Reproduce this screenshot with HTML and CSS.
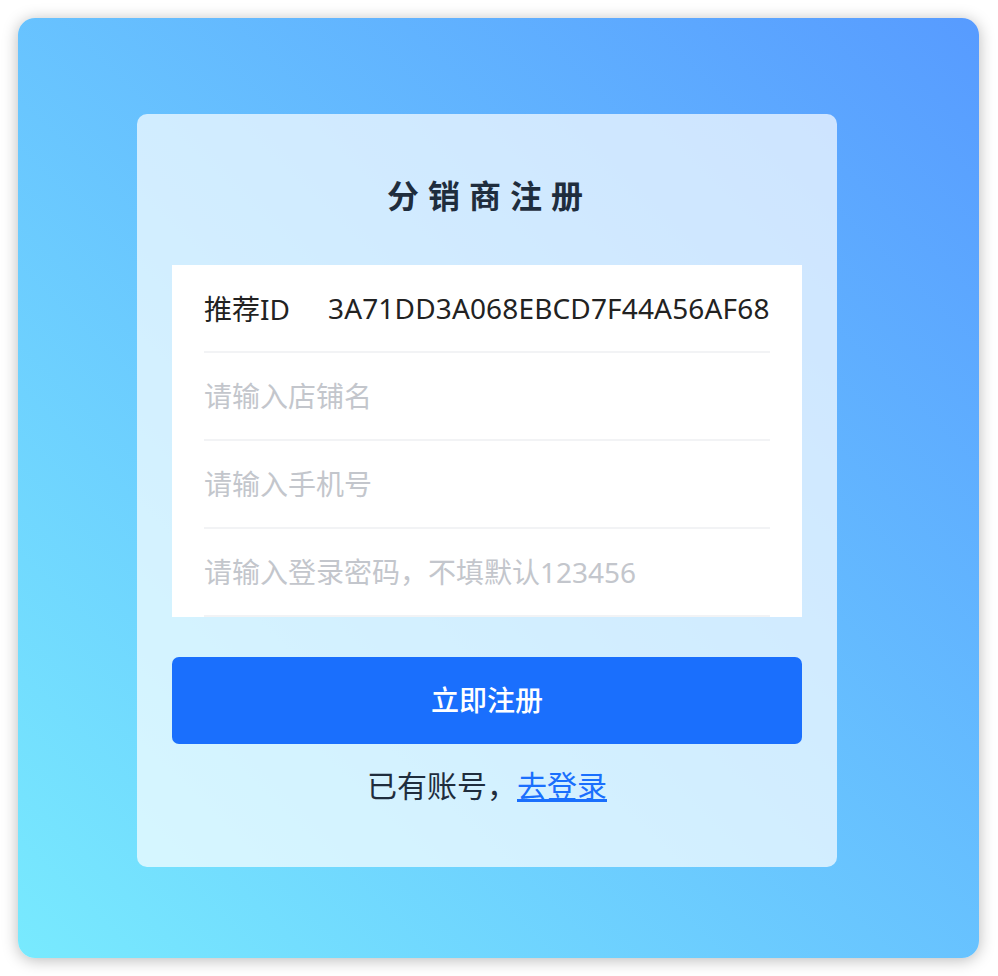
FILE: index.html
```html
<!DOCTYPE html>
<html lang="zh-CN">
<head>
<meta charset="utf-8">
<title>分销商注册</title>
<link rel="stylesheet" href="styles.css">
</head>
<body>
<div class="window">
  <div class="card">
    <h1 class="title">分销商注册</h1>
    <form class="form">
      <div class="row">
        <span class="label">推荐ID</span>
        <span class="value">3A71DD3A068EBCD7F44A56AF68</span>
      </div>
      <div class="row">
        <input class="field" type="text" placeholder="请输入店铺名">
      </div>
      <div class="row">
        <input class="field" type="text" placeholder="请输入手机号">
      </div>
      <div class="row">
        <input class="field" type="password" placeholder="请输入登录密码，不填默认123456">
      </div>
    </form>
    <button class="submit" type="button">立即注册</button>
    <p class="footer">已有账号，<a class="link" href="#">去登录</a></p>
  </div>
</div>
</body>
</html>
```

FILE: styles.css
```css
* {
  box-sizing: border-box;
}

html, body {
  margin: 0;
  padding: 0;
  background: #ffffff;
}

body {
  padding: 18px 19px 18px 18px;
  font-family: "Noto Sans", "Noto Sans CJK SC", sans-serif;
}

.window {
  width: 961px;
  height: 940px;
  border-radius: 17px;
  background: linear-gradient(to top right, #78eafe 0%, #579bff 100%);
  box-shadow: 0 2px 16px rgba(0, 0, 0, 0.28);
  padding: 96px 0 0 119px;
  display: flex;
  align-items: flex-start;
}

.card {
  width: 700px;
  height: 753px;
  border-radius: 10px;
  background: rgba(255, 255, 255, 0.7);
  padding: 60px 35px 0;
  display: flex;
  flex-direction: column;
}

.title {
  margin: 0 0 49px;
  height: 42px;
  line-height: 40px;
  text-align: center;
  font-family: "Noto Sans CJK SC", sans-serif;
  font-size: 32px;
  font-weight: 700;
  letter-spacing: 9px;
  text-indent: 5px;
  color: #1f2d3d;
}

.form {
  margin: 0;
  background: #ffffff;
  padding: 0 32px;
  display: flex;
  flex-direction: column;
}

.row {
  height: 88px;
  border-bottom: 2px solid #f2f3f5;
  display: flex;
  align-items: center;
}

.label {
  width: 124px;
  flex: none;
  font-size: 28px;
  color: #222222;
}

.value {
  font-size: 28px;
  letter-spacing: 0.15px;
  color: #222222;
}

.field {
  width: 100%;
  border: none;
  outline: none;
  padding: 0;
  background: transparent;
  font-family: "Noto Sans", "Noto Sans CJK SC", sans-serif;
  font-size: 28px;
  color: #222222;
}

.field::placeholder {
  color: #c3c6cc;
}

.submit {
  margin-top: 40px;
  height: 87px;
  border: none;
  border-radius: 7px;
  background: #1a6ffd;
  color: #ffffff;
  font-family: "Noto Sans CJK SC", sans-serif;
  font-size: 28px;
  font-weight: 500;
  padding: 0 0 4px;
  cursor: pointer;
}

.footer {
  margin: 18px 0 0;
  line-height: 45px;
  text-align: center;
  font-family: "Noto Sans CJK SC", sans-serif;
  font-size: 30px;
  color: #1f2d3d;
}

.link {
  color: #1a6ffd;
  text-decoration: underline;
}
```
